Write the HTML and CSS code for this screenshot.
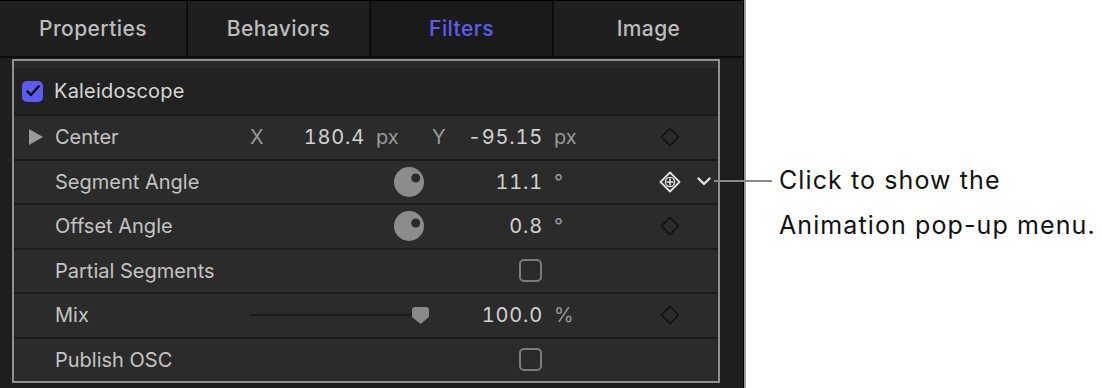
FILE: index.html
```html
<!DOCTYPE html>
<html lang="en">

<head>
  <meta charset="UTF-8" />
  <title>Filters - Kaleidoscope</title>
  <link rel="stylesheet" href="styles.css">
</head>

<body>

  <div class="painel">
    <div class="abas">
      <div class="aba">Properties</div>
      <div class="aba">Behaviors</div>
      <div class="aba ativa">Filters</div>
      <div class="aba ultima">Image</div>
    </div>

    <div class="conteudo">
      <div class="quadro">
        <div class="faixa"></div>

        <div class="cabecalho">
          <span class="check-on">
            <svg width="14" height="12" viewBox="0 0 14 12"><path d="M1.5 6.5 L5 10 L12.5 1.5" fill="none" stroke="#000" stroke-width="2.4" stroke-linecap="round" stroke-linejoin="round"/></svg>
          </span>
          <span class="nome">Kaleidoscope</span>
        </div>

        <!-- Linhas de parametros -->
        <div class="linha">
          <div class="c-seta"><svg width="14" height="16" viewBox="0 0 14 16"><path d="M0 0 L14 8 L0 16 Z" fill="#9a9a9a"/></svg></div>
          <div class="c-rotulo">Center</div>
          <div class="c-controle ponto">
            <span class="eixo">X</span>
            <span class="num-x">180.4</span>
            <span class="unidade">px</span>
          </div>
          <div class="c-valor ponto">
            <span class="eixo">Y</span>
            <span class="num-y">-95.15</span>
          </div>
          <div class="c-unidade">px</div>
          <div class="c-espaco"></div>
          <div class="c-chave"><svg width="20" height="20" viewBox="0 0 20 20"><path d="M10 1.5 L18.5 10 L10 18.5 L1.5 10 Z" fill="none" stroke="#121212" stroke-width="1.7"/></svg></div>
          <div class="c-menu"></div>
        </div>

        <div class="linha">
          <div class="c-seta"></div>
          <div class="c-rotulo">Segment Angle</div>
          <div class="c-controle dial-box">
            <svg width="30" height="30" viewBox="0 0 30 30"><circle cx="15" cy="15" r="15" fill="#8c8c8c"/><circle cx="21.7" cy="11" r="4.5" fill="#2a2a2a"/></svg>
          </div>
          <div class="c-valor">11.1</div>
          <div class="c-unidade">°</div>
          <div class="c-espaco"></div>
          <div class="c-chave"><svg width="22" height="22" viewBox="0 0 22 22"><path d="M11 1.5 L20.5 11 L11 20.5 L1.5 11 Z" fill="none" stroke="#e2e2e2" stroke-width="1.8" stroke-linejoin="round"/><circle cx="11" cy="11" r="4.6" fill="none" stroke="#e2e2e2" stroke-width="1.4"/><path d="M11 7.5 V14.5 M7.5 11 H14.5" stroke="#e2e2e2" stroke-width="1.6"/></svg></div>
          <div class="c-menu"><svg width="14" height="9" viewBox="0 0 14 9"><path d="M1.5 1.5 L7 7 L12.5 1.5" fill="none" stroke="#e0e0e0" stroke-width="2.4" stroke-linecap="round" stroke-linejoin="round"/></svg></div>
        </div>

        <div class="linha">
          <div class="c-seta"></div>
          <div class="c-rotulo">Offset Angle</div>
          <div class="c-controle dial-box">
            <svg width="30" height="30" viewBox="0 0 30 30"><circle cx="15" cy="15" r="15" fill="#8c8c8c"/><circle cx="21.7" cy="12" r="4.5" fill="#2a2a2a"/></svg>
          </div>
          <div class="c-valor">0.8</div>
          <div class="c-unidade">°</div>
          <div class="c-espaco"></div>
          <div class="c-chave"><svg width="20" height="20" viewBox="0 0 20 20"><path d="M10 1.5 L18.5 10 L10 18.5 L1.5 10 Z" fill="none" stroke="#121212" stroke-width="1.7"/></svg></div>
          <div class="c-menu"></div>
        </div>

        <div class="linha">
          <div class="c-seta"></div>
          <div class="c-rotulo">Partial Segments</div>
          <div class="c-controle"></div>
          <div class="c-valor"><span class="check-off"></span></div>
          <div class="c-unidade"></div>
          <div class="c-espaco"></div>
          <div class="c-chave"></div>
          <div class="c-menu"></div>
        </div>

        <div class="linha">
          <div class="c-seta"></div>
          <div class="c-rotulo">Mix</div>
          <div class="c-controle slider">
            <span class="trilho"></span>
            <svg class="cursor" width="17" height="17" viewBox="0 0 17 17"><path d="M3 0 H14 Q17 0 17 3 V10 L8.5 17 L0 10 V3 Q0 0 3 0 Z" fill="#8a8a8a"/></svg>
          </div>
          <div class="c-valor">100.0</div>
          <div class="c-unidade">%</div>
          <div class="c-espaco"></div>
          <div class="c-chave"><svg width="20" height="20" viewBox="0 0 20 20"><path d="M10 1.5 L18.5 10 L10 18.5 L1.5 10 Z" fill="none" stroke="#121212" stroke-width="1.7"/></svg></div>
          <div class="c-menu"></div>
        </div>

        <div class="linha">
          <div class="c-seta"></div>
          <div class="c-rotulo">Publish OSC</div>
          <div class="c-controle"></div>
          <div class="c-valor"><span class="check-off"></span></div>
          <div class="c-unidade"></div>
          <div class="c-espaco"></div>
          <div class="c-chave"></div>
          <div class="c-menu"></div>
        </div>
      </div>
    </div>

    <!-- Legenda -->
    <div class="legenda">
      <span class="traco"></span>
      <p>Click to show the<br>Animation pop-up menu.</p>
    </div>
  </div>

</body>

</html>
```

FILE: styles.css
```css
:root {
  --fundo: #1e1e1e;
  --linha: #2b2b2b;
  --separador: #1b1b1b;
  --texto: #d2d2d2;
  --cinza: #999;
  --roxo: #5e5cf0;
}

body {
  margin: 0;
  background: #fff;
  font-family: 'Inter', 'Noto Sans', sans-serif;
  height: 388px;
  overflow: hidden;
}

.painel {
  position: relative;
  width: 743px;
  height: 388px;
  background-color: var(--fundo);
  border-right: 1px solid #000;
  box-shadow: 2px 0 0 #9a9a9a;
}

/* Abas */
.abas {
  display: flex;
  height: 55px;
  border-top: 1px solid #000;
  border-bottom: 2px solid #0c0c0c;
}

.aba {
  width: 181px;
  display: flex;
  align-items: center;
  justify-content: center;
  color: #bdbdbd;
  font-size: 21px;
  font-weight: 500;
  letter-spacing: 0.4px;
  border-right: 2px solid #0c0c0c;
  background-color: #1f1f1f;
}

.aba:first-child {
  width: 186px;
}

.aba.ativa {
  color: var(--roxo);
  background-color: #1a1a1a;
}

.aba.ultima {
  flex: 1;
  border-right: none;
}

/* Quadro dos parametros */
.conteudo {
  padding: 1px 0 0 12px;
}

.quadro {
  width: 704px;
  border: 2px solid #8f8f8f;
  box-shadow: inset 0 0 0 1px #555;
  background-color: #212121;
}

.faixa {
  height: 7px;
  background-color: #2a2a2a;
}

.cabecalho {
  height: 46px;
  display: flex;
  align-items: center;
  padding-left: 8px;
  gap: 11px;
  background-color: #222;
}

.check-on {
  width: 21px;
  height: 21px;
  border-radius: 5px;
  background-color: var(--roxo);
  display: flex;
  align-items: center;
  justify-content: center;
}

.nome {
  color: #d6d6d6;
  font-size: 20px;
  letter-spacing: 0.2px;
}

.linha {
  height: 42.5px;
  display: flex;
  align-items: center;
  background-color: var(--linha);
  border-top: 2px solid var(--separador);
  font-size: 20px;
  color: var(--texto);
}

.c-seta {
  width: 41px;
  display: flex;
  justify-content: center;
  padding-left: 2px;
  box-sizing: border-box;
}

.c-rotulo {
  width: 195px;
  color: #c4c4c4;
}

.c-controle {
  width: 180px;
  display: flex;
  align-items: center;
}

.c-valor {
  width: 113px;
  display: flex;
  justify-content: flex-end;
  align-items: center;
  font-variant-numeric: tabular-nums;
  letter-spacing: 0.8px;
}

.c-unidade {
  width: 47px;
  padding-left: 11px;
  box-sizing: border-box;
  color: var(--cinza);
}

.c-espaco {
  width: 60px;
}

.c-chave {
  width: 40px;
  display: flex;
  justify-content: center;
  align-items: center;
}

.c-menu {
  width: 28px;
  display: flex;
  justify-content: center;
  align-items: center;
}

/* Center X / Y */
.eixo {
  color: var(--cinza);
  letter-spacing: 0;
}

.ponto .eixo {
  width: 20px;
}

.num-x {
  width: 95px;
  text-align: right;
  font-variant-numeric: tabular-nums;
  letter-spacing: 0.8px;
}

.num-y {
  flex: 1;
  text-align: right;
}

.unidade {
  color: var(--cinza);
  margin-left: 11px;
}

.c-valor.ponto {
  justify-content: flex-start;
  padding-left: 2px;
  box-sizing: border-box;
}

.dial-box {
  justify-content: flex-end;
  padding-right: 6px;
  box-sizing: border-box;
}

.check-off {
  width: 19px;
  height: 19px;
  border: 2px solid #7c7c7c;
  border-radius: 5px;
  margin-right: 1px;
}

.slider {
  position: relative;
}

.trilho {
  width: 171px;
  height: 2px;
  background-color: #1a1a1a;
}

.cursor {
  margin-left: -9px;
}

/* Legenda */
.legenda {
  position: absolute;
  left: 714px;
  top: 163px;
  display: flex;
  align-items: flex-start;
}

.traco {
  width: 58px;
  height: 2px;
  background-color: #8a8a8a;
  margin-top: 17px;
}

.legenda p {
  margin: 0 0 0 7px;
  color: #111;
  font-family: 'Inter', 'Liberation Sans', sans-serif;
  font-size: 25px;
  letter-spacing: 1.1px;
  line-height: 45px;
  margin-top: -5px;
  white-space: nowrap;
}
```
